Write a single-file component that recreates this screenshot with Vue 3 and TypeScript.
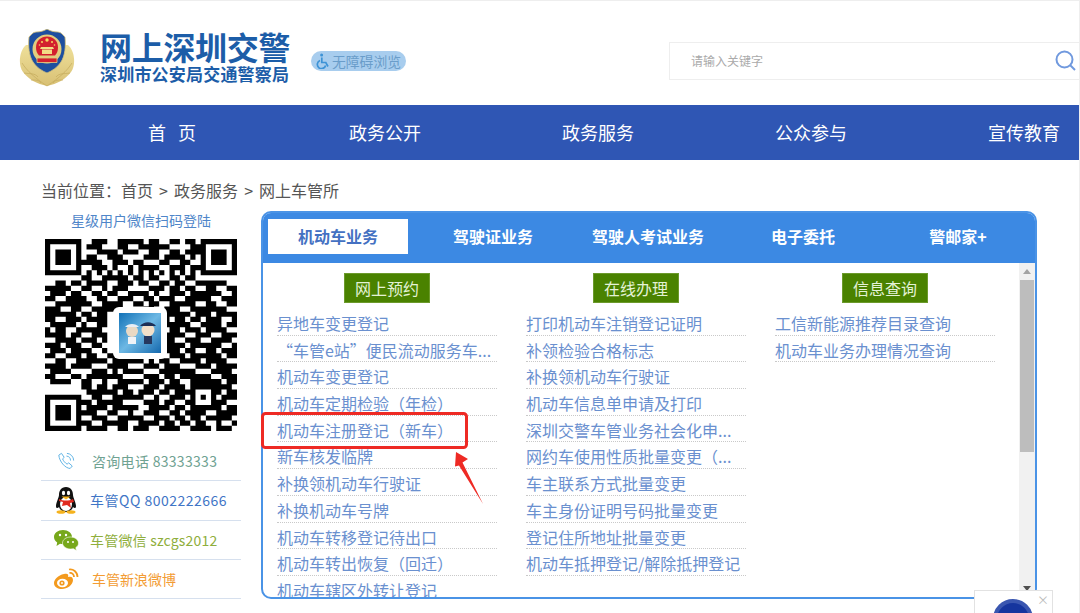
<script setup lang="ts">
import { computed } from 'vue'

const navItems = ['首\u00a0\u00a0\u00a0页', '政务公开', '政务服务', '公众参与', '宣传教育']
const tabs = ['机动车业务', '驾驶证业务', '驾驶人考试业务', '电子委托', '警邮家+']

const columns = [
  {
    title: '网上预约',
    links: [
      '异地车变更登记',
      '“车管e站”便民流动服务车...',
      '机动车变更登记',
      '机动车定期检验（年检）',
      '机动车注册登记（新车）',
      '新车核发临牌',
      '补换领机动车行驶证',
      '补换机动车号牌',
      '机动车转移登记待出口',
      '机动车转出恢复（回迁）',
      '机动车辖区外转让登记',
    ],
  },
  {
    title: '在线办理',
    links: [
      '打印机动车注销登记证明',
      '补领检验合格标志',
      '补换领机动车行驶证',
      '机动车信息单申请及打印',
      '深圳交警车管业务社会化申...',
      '网约车使用性质批量变更（...',
      '车主联系方式批量变更',
      '车主身份证明号码批量变更',
      '登记住所地址批量变更',
      '机动车抵押登记/解除抵押登记',
    ],
  },
  {
    title: '信息查询',
    links: ['工信新能源推荐目录查询', '机动车业务办理情况查询'],
  },
]

// 37x37 modules, the middle is hidden by the logo tile
const qrRows = [
  '1111111 00111 00111 11011 00110 110 1111111',
  '1000001 01110 00110 01111 11000 011 1000001',
  '1011101 00011 11011 10011 00110 111 1011101',
  '1011101 01100 11100 00111 01111 010 1011101',
  '1011101 11110 01110 11000 11001 100 1011101',
  '1000001 00111 01001 01111 00111 011 1000001',
  '1111111 01010 10101 01010 10101 010 1111111',
  '0000000 11001 11110 11011 00110 110 0000000',
  '0011011 01111 00111 01100 11011 001 1111100',
  '1111100 11001 01110 00011 10110 110 0110011',
  '0111011 00110 11001 11101 00111 011 1111001',
  '1100111 10011 00111 00110 11100 111 1100111',
  '0011111 11001 11100 11011 00111 110 0110011',
  '1110011 00111 11100 00110 01110 011 1111100',
  '1111110 11011 00000 00000 01111 101 1101111',
  '1100111 01111 00000 00000 11011 011 0111001',
  '0111110 10011 00000 00000 01111 100 1111011',
  '1011001 11110 00000 00000 00110 111 0111100',
  '1111011 00111 00000 00000 11111 001 1100111',
  '0011110 11101 00000 00000 11100 111 0011110',
  '1110111 00110 00000 00000 01111 011 1111001',
  '0111011 11001 00000 00000 11110 110 0110111',
  '1100111 01100 11100 01111 00111 011 1111011',
  '0011001 11111 01111 11010 11001 111 0111100',
  '1111011 11000 11110 00111 01110 001 1101111',
  '0111100 00111 01011 11000 11111 110 0011110',
  '1100011 01111 11100 00111 01101 111 1100111',
  '0111100 11001 00111 11011 10110 011 1111011',
  '0000000 11011 01110 00111 01111 011 1111110',
  '0000000 01111 11011 01110 11011 110 0011011',
  '1111111 00110 01111 11001 00111 010 1010111',
  '1000001 11011 11100 00111 01100 110 0011100',
  '1011101 01111 01111 10011 11011 011 1111011',
  '1011101 11100 11001 00111 00110 111 1001111',
  '1011101 00111 00111 11001 11011 011 0111110',
  '1000001 11001 11110 01111 01101 101 1001001',
  '1111111 01111 00110 11100 11110 011 1101110',
]

const qrPath = computed(() =>
  qrRows
    .map((row, y) => {
      const cells = row.replace(/ /g, '')
      let d = ''
      for (let x = 0; x < cells.length; x++) {
        if (cells[x] === '1') d += `M${x} ${y}h1v1h-1z`
      }
      return d
    })
    .join(''),
)
</script>

<template>
  <div class="page">
    <header class="header">
      <svg class="emblem" viewBox="0 0 56 58" width="56" height="58">
        <defs>
          <linearGradient id="gold" x1="0" y1="0" x2="0" y2="1">
            <stop offset="0" stop-color="#efe09a" />
            <stop offset="1" stop-color="#d8c074" />
          </linearGradient>
        </defs>
        <g fill="url(#gold)">
          <path d="M7 16C0 22-1 36 4 43c5 7 14 12 24 14 10-2 19-7 24-14 5-7 4-21-3-27z" />
        </g>
        <g fill="none" stroke="#c4aa5c" stroke-width="0.7">
          <path d="M3 34c5 8 13 15 25 23M53 34c-5 8-13 15-25 23" />
          <path d="M5 44c6 1 11 0 14 4M51 44c-6 1-11 0-14 4M12 51c5 0 8 0 10 3M44 51c-5 0-8 0-10 3" />
        </g>
        <path d="M28 0c3 2 7 3 11 3 3 0 5 3 7 5 1 9 0 19-4 25-3 5-9 9-14 11-5-2-11-6-14-11-4-6-5-16-4-25 2-2 4-5 7-5 4 0 8-1 11-3z" fill="#1e4f9f" stroke="#d9c47a" stroke-width="0.8" />
        <circle cx="28" cy="20" r="14.500" fill="#e2cd7e" />
        <path d="M28 7.500c6 0 11 4 11 11 0 3-1 6-3 8H20c-2-2-3-5-3-8 0-7 5-11 11-11z" fill="#d3202e" />
        <circle cx="28" cy="11" r="1.700" fill="#f5d863" />
        <circle cx="23" cy="13" r="1" fill="#f5d863" />
        <circle cx="33" cy="13" r="1" fill="#f5d863" />
        <circle cx="20.500" cy="16" r="0.800" fill="#f5d863" />
        <circle cx="35.500" cy="16" r="0.800" fill="#f5d863" />
        <path d="M22 18h12l1 2H21zM23 20.500h10V25H23z" fill="#f3dc85" />
        <path d="M18 29h20v4.500H18z" fill="#d3202e" stroke="#e2cd7e" stroke-width="0.8" />
      </svg>
      <div class="logo-text">
        <div class="logo-main">网上深圳交警</div>
        <div class="logo-sub">深圳市公安局交通警察局</div>
      </div>
      <div class="access">
        <svg viewBox="0 0 16 16" width="16" height="16" fill="none" stroke="#3d93d6" stroke-width="1.7">
          <circle cx="6.600" cy="2" r="1.500" fill="#3d93d6" stroke="none" />
          <path d="M6.800 4.500v5h4l2.200 4" />
          <path d="M5 7.500a4.200 4.200 0 1 0 5.600 5" />
        </svg>
        <span>无障碍浏览</span>
      </div>
      <div class="search">
        <span class="search-hint">请输入关键字</span>
        <svg class="search-icon" viewBox="0 0 21 21" width="21" height="21" fill="none" stroke="#7099de" stroke-width="2">
          <circle cx="9.500" cy="9.500" r="8" />
          <path d="M15 15l5 5" />
        </svg>
      </div>
    </header>

    <nav class="nav">
      <a v-for="item in navItems" :key="item" class="nav-item">{{ item }}</a>
    </nav>

    <div class="crumb">当前位置：首页 &gt; 政务服务 &gt; 网上车管所</div>

    <main class="main">
      <aside class="side">
        <div class="side-title">星级用户微信扫码登陆</div>
        <div class="qr">
          <svg viewBox="0 0 37 37" width="192" height="192">
            <path :d="qrPath" fill="#000" />
          </svg>
          <div class="qr-logo">
            <svg viewBox="0 0 42 40" width="42" height="40">
              <defs>
                <linearGradient id="qrBg" x1="0" y1="0" x2="1" y2="1">
                  <stop offset="0" stop-color="#1272b8" />
                  <stop offset="0.5" stop-color="#6db8e4" />
                  <stop offset="1" stop-color="#1468ad" />
                </linearGradient>
              </defs>
              <rect width="42" height="40" fill="url(#qrBg)" />
              <circle cx="13" cy="18" r="6" fill="#e9d9c4" />
              <path d="M6 14c3-4 11-4 14 0z" fill="#e8eef5" />
              <rect x="9" y="24" width="8" height="7" fill="#f0f3f7" />
              <circle cx="29" cy="17" r="6.500" fill="#f1dfc9" />
              <path d="M21 13c4-5 12-5 16 0z" fill="#1d2f56" />
              <rect x="25" y="23" width="8" height="8" fill="#26385f" />
            </svg>
          </div>
        </div>
        <ul class="contact">
          <li class="contact-row tel">
            <span class="contact-icon">
              <svg viewBox="0 0 20 20" width="18" height="18" fill="none" stroke="#62b4e5" stroke-width="1.100">
                <path d="M2 3.500L5 1.500l3 4.500-1.800 1.600c.8 2.200 2.800 4.600 5 5.900l1.800-1.400 4 3.500-2.400 2.700C9 18 2.600 10.500 2 3.500z" />
                <path d="M10.500 4.500a5 5 0 0 1 4.500 5M11 1.500a8 8 0 0 1 7.500 8" />
              </svg>
            </span>
            <span>咨询电话 83333333</span>
          </li>
          <li class="contact-row qq">
            <span class="contact-icon">
              <svg viewBox="0 0 26 28" width="26" height="28">
                <path d="M13 1c5 0 7 4 7 8 0 2 3 8 3 11 0 3-2 2-3 1-1 3-4 5-7 5s-6-2-7-5c-1 1-3 2-3-1 0-3 3-9 3-11 0-4 2-8 7-8z" fill="#111" />
                <ellipse cx="13" cy="18" rx="6" ry="7" fill="#fff" />
                <ellipse cx="10.500" cy="7" rx="1.600" ry="2.300" fill="#fff" />
                <ellipse cx="15.500" cy="7" rx="1.600" ry="2.300" fill="#fff" />
                <path d="M8.500 10.500h9l-4.500 3z" fill="#f5b21d" />
                <path d="M6 13c4 2 10 2 14 0l1 3-4 1 1 5-4-3-5 1 1-4-4-1z" fill="#e02a1f" />
                <ellipse cx="8" cy="26" rx="4.500" ry="1.800" fill="#f5b21d" />
                <ellipse cx="18" cy="26" rx="4.500" ry="1.800" fill="#f5b21d" />
              </svg>
            </span>
            <span>车管QQ 8002222666</span>
          </li>
          <li class="contact-row wechat">
            <span class="contact-icon">
              <svg viewBox="0 0 26 22" width="26" height="22">
                <path d="M10 1c5 0 9 3 9 7 0 4-4 7-9 7-1 0-2 0-3-.3L3.500 17l.7-3.600C2 12 1 10 1 8c0-4 4-7 9-7z" fill="#77a81b" />
                <path d="M17.500 8c4.500 0 8 2.800 8 6 0 2-1 3.500-2.700 4.600l.6 3-3-1.900c-.9.2-1.900.3-2.900.3-4.500 0-8-2.700-8-6s3.500-6 8-6z" fill="#77a81b" stroke="#fff" stroke-width="0.600" />
                <circle cx="7" cy="6" r="1.200" fill="#fff" />
                <circle cx="13" cy="6" r="1.200" fill="#fff" />
                <circle cx="15" cy="13" r="1" fill="#fff" />
                <circle cx="20" cy="13" r="1" fill="#fff" />
              </svg>
            </span>
            <span>车管微信 szcgs2012</span>
          </li>
          <li class="contact-row weibo">
            <span class="contact-icon">
              <svg viewBox="0 0 26 22" width="26" height="22">
                <path d="M11 6c3-1 5 0 4 3 3-1 5 0 5 3 0 5-6 9-11 9-4 0-8-2-8-6 0-3 4-8 10-9z" fill="#f39a1e" />
                <ellipse cx="9.500" cy="15" rx="5.500" ry="4.200" fill="#fff" />
                <circle cx="9" cy="15" r="2.600" fill="#f39a1e" />
                <circle cx="9" cy="15" r="0.900" fill="#fff" />
                <path d="M16 1.500c4-1 8.500 2.500 8.500 7.500M16.500 5c2.500-.5 4.500 1.500 4.500 4" fill="none" stroke="#f39a1e" stroke-width="1.800" />
              </svg>
            </span>
            <span>车管新浪微博</span>
          </li>
        </ul>
      </aside>

      <section class="panel">
        <div class="tabs">
          <div v-for="(tab, i) in tabs" :key="tab" class="tab" :class="{ active: i === 0 }">{{ tab }}</div>
        </div>
        <div class="panel-body">
          <div class="cols">
            <div v-for="col in columns" :key="col.title" class="col">
              <div class="col-title">{{ col.title }}</div>
              <a v-for="link in col.links" :key="link" class="link">{{ link }}</a>
            </div>
          </div>
          <div class="scrollbar">
            <span class="arrow-up" />
            <span class="thumb" />
            <span class="arrow-down" />
          </div>
        </div>
      </section>
    </main>

    <!-- hand drawn red marking over the page -->
    <svg class="marking" viewBox="0 0 1080 613" width="1080" height="613">
      <rect x="262.500" y="413.500" width="204" height="34" rx="3" fill="none" stroke="#ee2a24" stroke-width="3" />
      <path d="M456 452l12 7-5.500 3.500L483 504l-24-38.500-4 1z" fill="#ee2a24" />
    </svg>

    <div class="float-box">
      <span class="float-close">×</span>
      <span class="float-badge" />
    </div>
  </div>
</template>

<style scoped>
.page {
  position: relative;
  width: 1080px;
  height: 613px;
  box-sizing: border-box;
  border-top: 1px solid #eee;
  border-right: 1px solid #eee;
  overflow: hidden;
  background: #fff;
  font-family: "Noto Sans CJK SC", "Liberation Sans", sans-serif;
  color: #555;
}

.header {
  display: flex;
  align-items: center;
  height: 104px;
  padding-left: 19px;
}
.emblem {
  flex: none;
  margin-top: 10px;
}
.logo-text {
  flex: none;
  width: 211px;
  margin-left: 25px;
  margin-top: 6px;
  font-weight: 700;
  color: #1c5da8;
}
.logo-main {
  font-size: 32px;
  line-height: 36px;
  letter-spacing: -0.300px;
}
.logo-sub {
  font-size: 17px;
  line-height: 20px;
  letter-spacing: 0.200px;
}
.access {
  display: flex;
  align-items: center;
  gap: 1px;
  flex: none;
  width: 95px;
  height: 20px;
  box-sizing: border-box;
  padding-left: 4px;
  margin-top: 15px;
  border-radius: 10px;
  background: #a8cdee;
  color: #6a9dca;
  font-size: 13.800px;
  white-space: nowrap;
}
.search {
  display: flex;
  align-items: center;
  justify-content: space-between;
  width: 410px;
  height: 38px;
  box-sizing: border-box;
  margin-left: auto;
  margin-top: 15px;
  padding: 0 3px 0 21px;
  border: 1px solid #eee;
  border-right: 0;
}
.search-hint {
  font-size: 12px;
  color: #aaa;
}

.nav {
  display: flex;
  height: 55px;
  padding-left: 65.500px;
  background: #2f56b4;
  overflow: hidden;
}
.nav-item {
  flex: none;
  width: 213px;
  text-align: center;
  line-height: 55px;
  font-size: 18px;
  color: #fff;
}

.crumb {
  height: 51px;
  box-sizing: border-box;
  padding: 10px 0 0 41px;
  font-size: 16px;
  line-height: 41px;
  word-spacing: 2.500px;
}

.main {
  display: flex;
  gap: 20px;
  padding-left: 41px;
}
.side {
  flex: none;
  width: 200px;
}
.side-title {
  text-align: center;
  font-size: 14px;
  line-height: 18px;
  height: 20px;
  color: #4f86c9;
}
.qr {
  position: relative;
  width: 192px;
  height: 192px;
  margin: 8px 0 0 4px;
}
.qr svg {
  display: block;
}
.qr-logo {
  position: absolute;
  left: 68px;
  top: 68px;
  padding: 6px;
  background: #fff;
  border-radius: 6px;
}
.contact {
  list-style: none;
  margin: 11px 0 0;
  padding: 0;
  font-size: 14px;
}
.contact-row {
  display: flex;
  align-items: center;
  height: 39.330px;
  box-sizing: border-box;
  border-bottom: 1px solid #d6e0ee;
  white-space: nowrap;
}
.contact-icon {
  display: flex;
  justify-content: center;
  align-items: center;
  flex: none;
  width: 49px;
}
.contact-icon svg {
  display: block;
}
.tel span:last-child,
.weibo span:last-child {
  margin-left: 2px;
}
.tel {
  color: #6fa292;
  letter-spacing: 0.300px;
}
.qq {
  color: #3f75c6;
  letter-spacing: 0.500px;
}
.wechat {
  color: #8fae3c;
  letter-spacing: 0.200px;
}
.weibo {
  color: #f39c33;
}

.panel {
  display: flex;
  flex-direction: column;
  flex: none;
  width: 776px;
  height: 388px;
  box-sizing: border-box;
  border: 2px solid #4a93e6;
  border-radius: 10px;
  overflow: hidden;
}
.tabs {
  display: flex;
  flex: none;
  gap: 15px;
  height: 50px;
  box-sizing: border-box;
  padding: 6px 0 0 5px;
  background: #3c89e3;
}
.tab {
  flex: none;
  width: 140px;
  height: 35px;
  line-height: 35px;
  text-align: center;
  font-size: 16px;
  font-weight: 700;
  color: #fff;
  white-space: nowrap;
}
.tab.active {
  background: #fff;
  color: #4471c2;
}
.panel-body {
  display: flex;
  flex: 1;
  min-height: 0;
}
.cols {
  display: flex;
  flex: 1;
  gap: 29px;
  padding: 10px 0 0 14px;
  overflow: hidden;
}
.col {
  flex: none;
  width: 220px;
}
.col-title {
  width: 86px;
  height: 30px;
  line-height: 28px;
  margin: 0 auto 6px;
  box-sizing: border-box;
  border: 1px solid #6c9a2c;
  background: #4a8200;
  text-align: center;
  font-size: 16px;
  color: #e4f2d6;
}
.link {
  display: block;
  height: 26.700px;
  box-sizing: border-box;
  padding-top: 3px;
  line-height: 23px;
  font-size: 16px;
  color: #6a90cf;
  border-bottom: 1px dotted #c9c9c9;
  white-space: nowrap;
}
.scrollbar {
  display: flex;
  flex-direction: column;
  align-items: center;
  flex: none;
  width: 16px;
  background: #f1f1f1;
}
.thumb {
  width: 14px;
  height: 172px;
  margin-top: 6px;
  background: #bdbdbd;
}
.arrow-up,
.arrow-down {
  width: 0;
  height: 0;
  border-left: 4px solid transparent;
  border-right: 4px solid transparent;
}
.arrow-up {
  margin-top: 6px;
  border-bottom: 5px solid #a3a3a3;
}
.arrow-down {
  margin-top: auto;
  margin-bottom: 6px;
  border-top: 5px solid #505050;
}

.marking {
  position: absolute;
  left: 0;
  top: -1px;
  pointer-events: none;
}
.float-box {
  position: absolute;
  left: 974px;
  top: 589px;
  width: 79px;
  height: 30px;
  box-sizing: border-box;
  border: 1px solid #e2e2e2;
  background: #fff;
}
.float-close {
  position: absolute;
  right: 3px;
  top: 0;
  font-size: 12px;
  line-height: 18px;
  color: #bbb;
}
.float-badge {
  position: absolute;
  left: 18px;
  top: 8px;
  width: 32px;
  height: 32px;
  border: 4px solid #3a56b0;
  border-radius: 50%;
  background: #16359e;
}
</style>

<style>
html,
body {
  margin: 0;
  background: #fff;
  overflow: hidden;
}
</style>
